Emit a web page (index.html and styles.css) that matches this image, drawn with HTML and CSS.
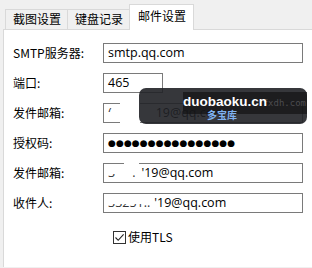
FILE: index.html
```html
<!DOCTYPE html>
<html lang="zh-CN">
<head>
  <meta charset="UTF-8">
  <title>邮件设置</title>
  <link rel="stylesheet" href="styles.css">
</head>
<body>

<div class="window">
  <div class="tabs">
    <div class="tab">截图设置</div>
    <div class="tab">键盘记录</div>
    <div class="tab active">邮件设置</div>
  </div>

  <div class="panel">
    <div class="form">
      <label>SMTP服务器:</label>
      <div class="field">smtp.qq.com</div>

      <label>端口:</label>
      <div class="field short">465</div>

      <label>发件邮箱:</label>
      <div class="field">
        <span class="frag frag-top">(</span><span class="tail tail-a">19@qq.com</span>
        <span class="patch patch-a"></span>
      </div>

      <label>授权码:</label>
      <div class="field dots">●●●●●●●●●●●●●●●●</div>

      <label>发件邮箱:</label>
      <div class="field">
        <span class="frag frag-low">3</span><span class="frag frag-low dot">.</span><span class="tail tail-b">'19@qq.com</span>
        <span class="patch patch-b"></span>
      </div>

      <label>收件人:</label>
      <div class="field">
        <span class="frag frag-low">33251..</span><span class="tail tail-c">'19@qq.com</span>
      </div>
    </div>

    <div class="check-row">
      <span class="checkbox">
        <svg width="11" height="11" viewBox="0 0 11 11"><path d="M1.5 5.5 L4.2 8.3 L9.6 2.4" fill="none" stroke="#222" stroke-width="1.1"/></svg>
      </span>
      <span>使用TLS</span>
    </div>
  </div>
</div>

<!-- watermark over the form -->
<div class="mark">
  <div class="mark-band">fxdh.com</div>
  <div class="mark-title">duobaoku.cn</div>
  <div class="mark-sub">多宝库</div>
</div>

</body>
</html>
```

FILE: styles.css
```css
body {
  margin: 0;
  background-color: #f0f0f0;
  font-family: "Noto Sans CJK SC", "Noto Sans", sans-serif;
  font-size: 12px;
  color: #000;
  width: 312px;
  height: 268px;
  overflow: hidden;
  position: relative;
}

.window {
  padding: 5px 0 0 3px;
}

.tabs {
  display: flex;
  align-items: flex-end;
  height: 24px;
  padding-left: 2px;
}

.tab {
  height: 19px;
  line-height: 18px;
  padding: 0 6px 0 7px;
  border: 1px solid #d9d9d9;
  border-bottom: none;
  margin-right: -1px;
  background-color: #f0f0f0;
}

.tab.active {
  height: 25px;
  line-height: 21px;
  padding: 0 7px 0 8px;
  background-color: #fff;
  margin-bottom: -1px;
  position: relative;
  z-index: 1;
}

.panel {
  background-color: #fff;
  border-top: 1px solid #d9d9d9;
  border-left: 1px solid #d9d9d9;
  height: 238px;
  padding: 13px 0 0 9px;
  box-sizing: border-box;
}

.form {
  display: grid;
  grid-template-columns: 90px 200px;
  row-gap: 10px;
  align-items: center;
}

.form label {
  line-height: 20px;
}

.field {
  position: relative;
  height: 20px;
  line-height: 18px;
  border: 1px solid #7a7a7a;
  padding-left: 4px;
  box-sizing: border-box;
  font-family: "Open Sans", "Noto Sans", sans-serif;
  font-size: 12.5px;
  white-space: nowrap;
}

.field.short {
  width: 60px;
}

.dots {
  font-family: "DejaVu Sans", sans-serif;
  font-size: 9px;
  letter-spacing: 0.1px;
}

.frag {
  display: inline-block;
  color: #333;
}

.frag-top {
  clip-path: inset(0 0 55% 0);
}

.frag-low {
  clip-path: inset(55% 0 0 0);
}

.dot {
  margin-left: 17px;
}

.tail-a {
  margin-left: 44px;
}

.tail-b {
  margin-left: 6px;
}

.tail-c {
  margin-left: 4px;
}

.patch {
  position: absolute;
  background-color: #fff;
}

.patch-a {
  left: 16px;
  top: -2px;
  width: 20px;
  height: 23px;
}

.patch-b {
  left: 20px;
  top: -4px;
  width: 15px;
  height: 6px;
}

.check-row {
  display: flex;
  align-items: center;
  gap: 2px;
  margin: 17px 0 0 100px;
  line-height: 14px;
}

.checkbox {
  width: 13px;
  height: 13px;
  border: 1px solid #333;
  box-sizing: border-box;
  display: flex;
  align-items: center;
  justify-content: center;
}

.mark {
  position: absolute;
  left: 139px;
  top: 88px;
  width: 168px;
  height: 36px;
  border-radius: 7px;
  background-color: rgba(32, 33, 38, 0.9);
}

.mark-band {
  position: absolute;
  left: 44px;
  right: 0;
  top: 4px;
  height: 22px;
  line-height: 22px;
  background-color: rgba(18, 18, 20, 0.7);
  color: #4c4c50;
  font-family: "DejaVu Sans Mono", monospace;
  font-size: 9px;
  text-align: right;
  padding-right: 1px;
}

.mark-title {
  position: absolute;
  left: 44px;
  top: 7px;
  color: #fff;
  font-family: "Liberation Sans", sans-serif;
  font-weight: bold;
  font-size: 13.5px;
  line-height: 14px;
}

.mark-sub {
  position: absolute;
  left: 68px;
  top: 21px;
  color: #7fb1ee;
  font-size: 10px;
  line-height: 12px;
  font-weight: bold;
}
```
